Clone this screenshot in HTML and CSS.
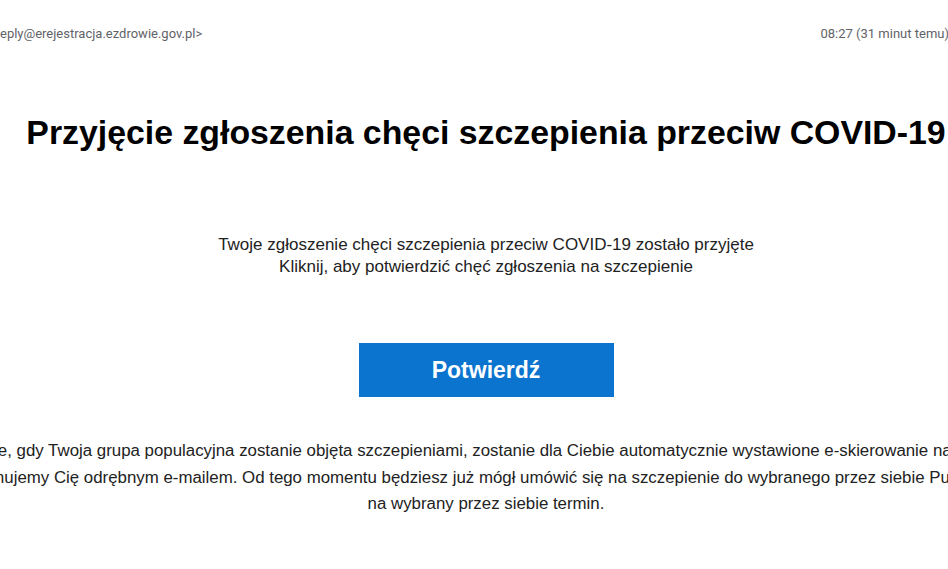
FILE: index.html
```html
<!DOCTYPE html>
<html lang="pl">
<head>
<meta charset="utf-8">
<link rel="stylesheet" href="styles.css">
</head>
<body>
<div class="page">
  <div class="meta">
    <span class="sender">eply@erejestracja.ezdrowie.gov.pl&gt;</span>
    <span class="time">08:27 (31 minut temu)</span>
  </div>
  <div class="mail">
    <h1 class="title">Przyjęcie zgłoszenia chęci szczepienia przeciw COVID-19</h1>
    <p class="intro">Twoje zgłoszenie chęci szczepienia przeciw COVID-19 zostało przyjęte<br>Kliknij, aby potwierdzić chęć zgłoszenia na szczepienie</p>
    <div class="action"><a class="btn">Potwierdź</a></div>
    <p class="info">W momencie, gdy Twoja grupa populacyjna zostanie objęta szczepieniami, zostanie dla Ciebie automatycznie wystawione e-skierowanie na szczepienie.&nbsp;&nbsp;&nbsp;<br>Też poinformujemy Cię odrębnym e-mailem. Od tego momentu będziesz już mógł umówić się na szczepienie do wybranego przez siebie Punktu Szczepień<br>na wybrany przez siebie termin.</p>
  </div>
</div>
</body>
</html>
```
FILE: styles.css
```css
html, body {
  margin: 0;
  padding: 0;
  background: #ffffff;
  overflow: hidden;
}
.page {
  width: 948px;
  height: 569px;
  overflow: hidden;
}
.meta {
  display: flex;
  justify-content: space-between;
  align-items: center;
  height: 20px;
  margin-top: 23px;
  margin-right: -1px;
  font-family: Roboto, "Liberation Sans", sans-serif;
  font-size: 13px;
  color: #5f6368;
  white-space: nowrap;
}
.mail {
  width: 1400px;
  margin-left: -214px;
  font-family: "Liberation Sans", Arial, sans-serif;
  color: #222222;
  text-align: center;
}
.title {
  margin: 69px 0 0;
  font-size: 33.85px;
  line-height: 40px;
  font-weight: bold;
  color: #000000;
}
.intro {
  margin: 82px 0 0;
  font-size: 17px;
  line-height: 22px;
}
.action {
  display: flex;
  justify-content: center;
  margin-top: 65px;
}
.btn {
  display: flex;
  align-items: center;
  justify-content: center;
  width: 255px;
  height: 54px;
  background: #0b74cf;
  color: #ffffff;
  font-size: 23px;
  font-weight: bold;
  text-decoration: none;
}
.info {
  margin: 41px 0 0;
  font-size: 16.85px;
  line-height: 26.5px;
  white-space: nowrap;
}
```
